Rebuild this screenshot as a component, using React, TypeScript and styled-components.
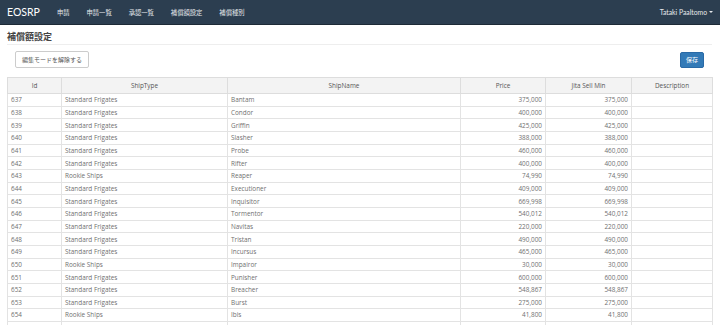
import React from 'react';
import styled, { createGlobalStyle } from 'styled-components';

const GlobalStyle = createGlobalStyle`
	html, body {
		margin: 0;
		padding: 0;
		background: #fff;
		overflow: hidden;
	}
	body {
		font-family: 'Open Sans', 'Noto Sans CJK JP', sans-serif;
	}
`;

const Navbar = styled.div`
	height: 25px;
	background: #2c3e50;
	border-bottom: 1px solid #1d2a36;
	display: flex;
	align-items: center;
	padding: 0 7px;
	box-sizing: border-box;
`;

const Brand = styled.div`
	font-family: Lato, 'Noto Sans', sans-serif;
	font-size: 10.5px;
	color: #fff;
	margin-right: 17px;
`;

const NavItem = styled.div`
	font-family: 'Noto Sans CJK JP', sans-serif;
	font-size: 6.3px;
	color: #e6e9ec;
	margin-right: 17px;
`;

const Spacer = styled.div`
	flex: 1;
`;

const User = styled.div`
	font-family: Lato, sans-serif;
	font-size: 6.8px;
	color: #e6e9ec;
	display: flex;
	align-items: center;
	gap: 2px;
`;

const Caret = styled.span`
	width: 0;
	height: 0;
	border-left: 2px solid transparent;
	border-right: 2px solid transparent;
	border-top: 2px solid #e6e9ec;
`;

const Page = styled.div`
	padding: 0 8px 0 7px;
`;

const Header = styled.div`
	height: 18px;
	border-bottom: 1px solid #eee;
	display: flex;
	align-items: flex-end;
	padding-bottom: 1px;
`;

const Title = styled.h1`
	margin: 0;
	font-family: 'Noto Sans CJK JP', sans-serif;
	font-size: 9px;
	font-weight: 700;
	color: #444;
	line-height: 12px;
`;

const Toolbar = styled.div`
	display: flex;
	justify-content: space-between;
	align-items: center;
	padding: 6px 8px 0 8px;
	height: 17px;
`;

const Button = styled.button<{ primary?: boolean }>`
	font-family: 'Noto Sans CJK JP', sans-serif;
	font-size: 6px;
	padding: 0 ${p => (p.primary ? '5px' : '6px')};
	border-radius: 2px;
	border: 1px solid ${p => (p.primary ? '#2a6aa6' : '#ccc')};
	background: ${p => (p.primary ? '#337ab7' : '#fff')};
	color: ${p => (p.primary ? '#fff' : '#555')};
	height: ${p => (p.primary ? '16px' : '17px')};
	cursor: pointer;
`;

const Table = styled.table`
	margin-top: 9px;
	width: 705px;
	border-collapse: collapse;
	table-layout: fixed;
	font-size: 6.4px;
	color: #6f6f6f;
`;

const Th = styled.th`
	font-weight: 400;
	color: #555;
	background: #f3f3f3;
	border: 1px solid #ddd;
	height: 15px;
	padding: 0;
	text-align: center;
`;

const Td = styled.td<{ right?: boolean }>`
	border: 1px solid #e3e3e3;
	height: 11.67px;
	line-height: 11px;
	padding: 0 3px 0 3px;
	text-align: ${p => (p.right ? 'right' : 'left')};
	white-space: nowrap;
`;

const nav = ['申請', '申請一覧', '承認一覧', '補償額設定', '補償種別'];

const rows: [number, string, string, string][] = [
	[637, 'Standard Frigates', 'Bantam', '375,000'],
	[638, 'Standard Frigates', 'Condor', '400,000'],
	[639, 'Standard Frigates', 'Griffin', '425,000'],
	[640, 'Standard Frigates', 'Slasher', '388,000'],
	[641, 'Standard Frigates', 'Probe', '460,000'],
	[642, 'Standard Frigates', 'Rifter', '400,000'],
	[643, 'Rookie Ships', 'Reaper', '74,990'],
	[644, 'Standard Frigates', 'Executioner', '409,000'],
	[645, 'Standard Frigates', 'Inquisitor', '669,998'],
	[646, 'Standard Frigates', 'Tormentor', '540,012'],
	[647, 'Standard Frigates', 'Navitas', '220,000'],
	[648, 'Standard Frigates', 'Tristan', '490,000'],
	[649, 'Standard Frigates', 'Incursus', '465,000'],
	[650, 'Rookie Ships', 'Impairor', '30,000'],
	[651, 'Standard Frigates', 'Punisher', '600,000'],
	[652, 'Standard Frigates', 'Breacher', '548,867'],
	[653, 'Standard Frigates', 'Burst', '275,000'],
	[654, 'Rookie Ships', 'Ibis', '41,800'],
	[655, 'Standard Frigates', 'Kestrel', '440,000'],
	[656, 'Standard Frigates', 'Atron', '380,000'],
];

const App = () => {
	return (
		<>
			<GlobalStyle />
			<Navbar>
				<Brand>EOSRP</Brand>
				{nav.map(n => (
					<NavItem key={n}>{n}</NavItem>
				))}
				<Spacer />
				<User>
					Tataki Paaltomo <Caret />
				</User>
			</Navbar>
			<Page>
				<Header>
					<Title>補償額設定</Title>
				</Header>
				<Toolbar>
					<Button>編集モードを解除する</Button>
					<Button primary>保存</Button>
				</Toolbar>
				<Table>
					<colgroup>
						<col style={{ width: 54 }} />
						<col style={{ width: 166 }} />
						<col style={{ width: 233 }} />
						<col style={{ width: 85 }} />
						<col style={{ width: 86 }} />
						<col style={{ width: 81 }} />
					</colgroup>
					<thead>
						<tr>
							<Th>Id</Th>
							<Th>ShipType</Th>
							<Th>ShipName</Th>
							<Th>Price</Th>
							<Th>Jita Sell Min</Th>
							<Th>Description</Th>
						</tr>
					</thead>
					<tbody>
						{rows.map(([id, type, name, price]) => (
							<tr key={id}>
								<Td>{id}</Td>
								<Td>{type}</Td>
								<Td>{name}</Td>
								<Td right>{price}</Td>
								<Td right>{price}</Td>
								<Td />
							</tr>
						))}
					</tbody>
				</Table>
			</Page>
		</>
	);
};

export default App;
